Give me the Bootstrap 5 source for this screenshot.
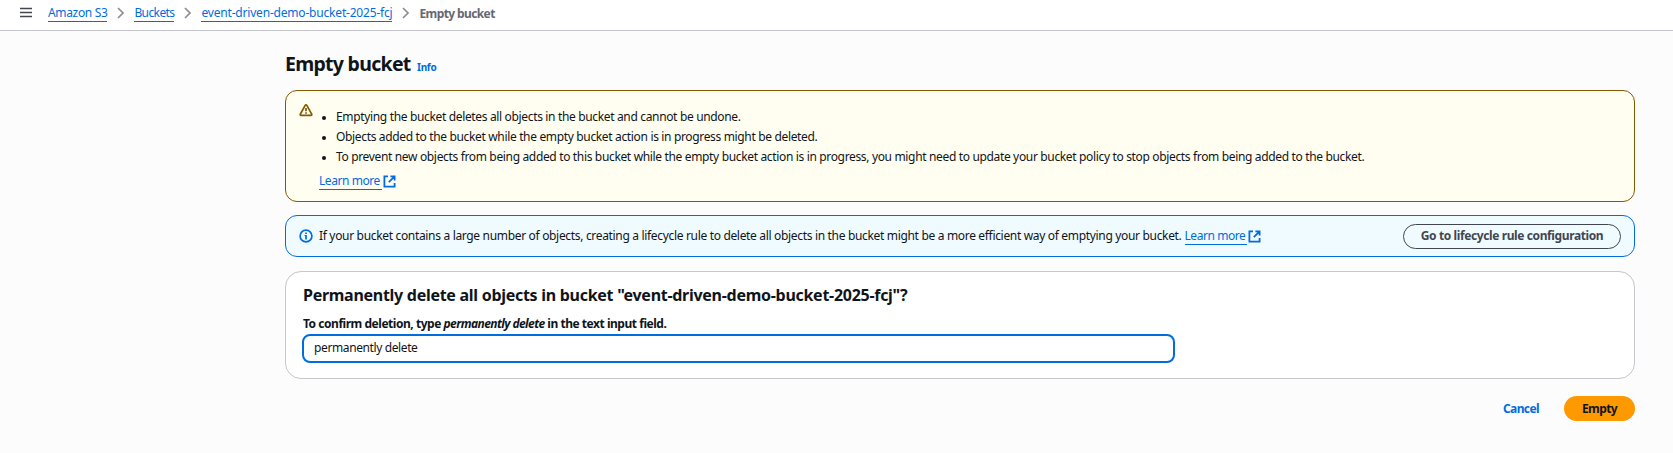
<!DOCTYPE html>
<html lang="en">
<head>
<meta charset="utf-8">
<title>Empty bucket</title>
<link href="https://cdn.jsdelivr.net/npm/bootstrap@5.3.0/dist/css/bootstrap.min.css" rel="stylesheet">
<style>
body{font-family:"Noto Sans","Open Sans",sans-serif;font-size:12px;line-height:20px;letter-spacing:-.343px;color:#0f141a;background:#fcfcfd;overflow:hidden}
svg{display:block;flex:none}
.topbar{height:31px;padding:0 0 4px 20px;border-bottom:1px solid #c6c6cd}
.crumbs{margin-left:16px}
.crumbs svg{margin:0 9px}
.link-line{color:#006ce0;text-decoration:none;display:inline-block;line-height:16px;border-bottom:1px solid #006ce0}
.link-line:hover{color:#002b66}
.crumb-buckets{letter-spacing:-.6px}
.crumb-bucket-name{letter-spacing:-.191px}
.learn-more{letter-spacing:-.43px;padding-right:2px;margin-right:1px}
.crumb-now{color:#656871;font-weight:700;letter-spacing:-.61px;padding-top:1px}
main{padding:20px 38px 0 285px}
h1{font-size:19.5px;font-weight:700;line-height:26px;letter-spacing:-.72px}
.info-link{font-size:10px;font-weight:700;letter-spacing:-.3px;color:#006ce0;text-decoration:none;margin-left:6.5px}
.flash{border:1px solid;border-radius:12px;padding:0 13px}
.flash-warn{background:#fffef0;border-color:#855900;height:112px;margin-top:13px}
.flash-info{background:#f0fbff;border-color:#006ce0;height:42px;margin-top:13px;letter-spacing:-.326px}
.flash-warn ul{padding-left:17px;list-style:none}
.flash-warn li::before{content:"";float:left;width:4px;height:4px;border-radius:50%;background:#0f141a;margin:9px 0 0 -14px}
.pill{border-radius:20px;font-size:12px;font-weight:700;line-height:20px;padding:1px 17px 3px;border-width:1.5px}
.pill-outline{width:218px;padding-left:0;padding-right:0;height:25px;border-color:#424650;color:#424650;letter-spacing:-.389px;white-space:nowrap}
.panel{background:#fff;border:1px solid #c6c6cd;border-radius:16px;height:108px;margin-top:14px;padding:11px 17px 0}
h2{font-size:16px;font-weight:700;line-height:24px;letter-spacing:-.28px}
.field-label{font-weight:700;letter-spacing:-.467px;line-height:16px;margin-top:9px}
.field-label em{letter-spacing:-.58px}
.confirm{width:873px;height:29px;border:2px solid #006ce0;border-radius:8px;font-size:12px;padding:0 10px 2px;color:#0f141a;letter-spacing:-.385px;margin:2px 0 0 -1px}
.actions{margin-top:17px;height:25px}
.pill-primary{background:#f90;color:#0f141a;width:71px;height:25px;padding:0;border:0;letter-spacing:-.6px}
.cancel{color:#006ce0;font-weight:700;text-decoration:none;margin-right:25px;letter-spacing:-.6px}
</style>
</head>
<body>
<header class="topbar bg-white d-flex align-items-center">
  <svg width="12" height="12" viewBox="0 0 12 12" stroke="#424650" stroke-width="1.7"><path d="M0 1.5h12M0 5.5h12M0 9.5h12"/></svg>
  <nav class="crumbs d-flex align-items-center" aria-label="breadcrumb">
    <a class="link-line" href="#">Amazon S3</a>
    <svg width="9" height="12" viewBox="0 0 9 12" fill="none" stroke="#8c8c94" stroke-width="1.7"><path d="M2 1l5 5-5 5"/></svg>
    <a class="link-line crumb-buckets" href="#">Buckets</a>
    <svg width="9" height="12" viewBox="0 0 9 12" fill="none" stroke="#8c8c94" stroke-width="1.7"><path d="M2 1l5 5-5 5"/></svg>
    <a class="link-line crumb-bucket-name" href="#">event-driven-demo-bucket-2025-fcj</a>
    <svg width="9" height="12" viewBox="0 0 9 12" fill="none" stroke="#8c8c94" stroke-width="1.7"><path d="M2 1l5 5-5 5"/></svg>
    <span class="crumb-now">Empty bucket</span>
  </nav>
</header>
<main>
  <div class="d-flex align-items-baseline"><h1 class="mb-0">Empty bucket</h1><a class="info-link" href="#">Info</a></div>

  <section class="flash flash-warn d-flex">
    <svg style="margin-top:12px" width="14" height="14" viewBox="0 0 14 14" fill="none" stroke="#855900" stroke-width="1.7" stroke-linejoin="round"><path d="M6.3 2.2a.8.8 0 0 1 1.4 0l5 9a.8.8 0 0 1-.7 1.2H2a.8.8 0 0 1-.7-1.2z"/><path d="M7 5v3.3M7 9.2v1.5"/></svg>
    <div style="margin:16px 0 0 6px">
      <ul class="mb-0">
        <li>Emptying the bucket deletes all objects in the bucket and cannot be undone.</li>
        <li>Objects added to the bucket while the empty bucket action is in progress might be deleted.</li>
        <li>To prevent new objects from being added to this bucket while the empty bucket action is in progress, you might need to update your bucket policy to stop objects from being added to the bucket.</li>
      </ul>
      <div class="d-flex align-items-center" style="margin-top:6px"><a class="link-line learn-more" href="#">Learn more</a>
        <svg width="13" height="13" viewBox="0 0 13 13" fill="none" stroke="#006ce0" stroke-width="1.8"><path d="M5 1.4H1.4v10.2h10.2V8M7.4 1.4h4.2v4.2M11.6 1.4 5.8 7.2"/></svg></div>
    </div>
  </section>

  <section class="flash flash-info d-flex align-items-center">
    <svg width="14" height="14" viewBox="0 0 14 14" fill="none" stroke="#006ce0" stroke-width="1.7"><circle cx="7" cy="7" r="5.9"/><path d="M7 3.4v1.7M7 6v4.4"/><path d="M5.6 6.5H7" stroke-width="1"/></svg>
    <div class="d-flex align-items-center" style="margin-left:6px"><span>If your bucket contains a large number of objects, creating a lifecycle rule to delete all objects in the bucket might be a more efficient way of emptying your bucket.</span>
      <a class="link-line learn-more" style="margin-left:3px" href="#">Learn more</a>
      <svg width="13" height="13" viewBox="0 0 13 13" fill="none" stroke="#006ce0" stroke-width="1.8"><path d="M5 1.4H1.4v10.2h10.2V8M7.4 1.4h4.2v4.2M11.6 1.4 5.8 7.2"/></svg></div>
    <button class="btn pill pill-outline ms-auto">Go to lifecycle rule configuration</button>
  </section>

  <section class="panel">
    <h2 class="mb-0">Permanently delete all objects in bucket "event-driven-demo-bucket-2025-fcj"?</h2>
    <label class="field-label d-block" for="confirm">To confirm deletion, type <em>permanently delete</em> in the text input field.</label>
    <input id="confirm" class="confirm d-block" type="text" value="permanently delete">
  </section>

  <div class="actions d-flex justify-content-end align-items-center">
    <a class="cancel" href="#">Cancel</a>
    <button class="btn pill pill-primary">Empty</button>
  </div>
</main>
<script src="https://cdn.jsdelivr.net/npm/bootstrap@5.3.0/dist/js/bootstrap.bundle.min.js"></script>
</body>
</html>
